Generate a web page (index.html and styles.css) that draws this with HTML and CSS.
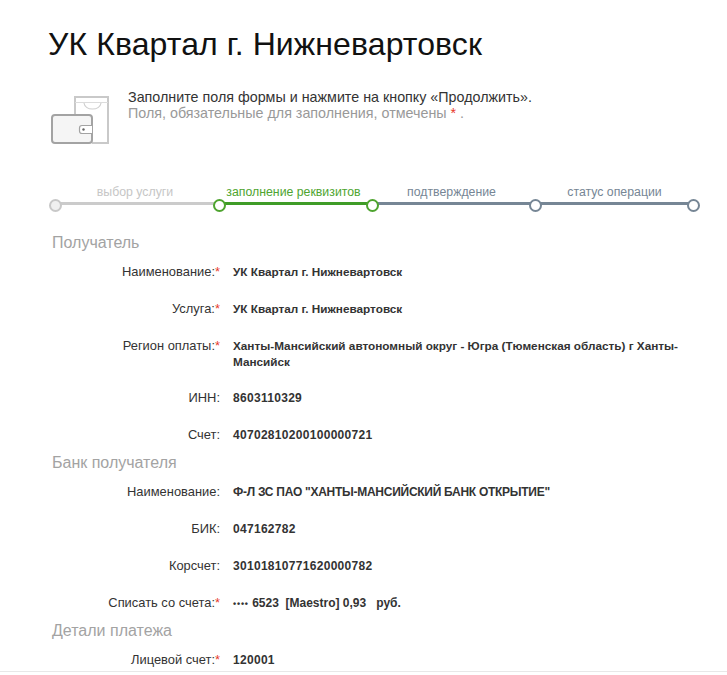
FILE: index.html
```html
<!DOCTYPE html>
<html lang="ru">
<head>
<meta charset="utf-8">
<title>УК Квартал г. Нижневартовск</title>
<link rel="stylesheet" href="styles.css">
</head>
<body>
<main class="page">
  <h1 class="title">УК Квартал г. Нижневартовск</h1>
  <div class="intro">
    <svg class="intro-icon" width="60" height="50" viewBox="0 0 60 50">
      <path d="M25 20V2h33v46H42" fill="#fff" stroke="#c9c9c9" stroke-width="2"/>
      <path d="M25 7.500h33" stroke="#dcdcdc" stroke-width="1" fill="none"/>
      <path d="M34 8c1 8 16 8 17 0" stroke="#cfcfcf" stroke-width="1.200" fill="none"/>
      <rect x="2" y="20" width="40" height="28" rx="3" fill="#f5f5f5" stroke="#a3a3a3" stroke-width="2"/>
      <path d="M42 30.500H32a2.500 2.500 0 0 0-2.500 2.500v3a2.500 2.500 0 0 0 2.500 2.500h10" fill="#fff" stroke="#a3a3a3" stroke-width="1.200"/>
      <circle cx="33.500" cy="34.500" r="1.200" fill="#666"/>
    </svg>
    <div class="intro-text">
      <p class="intro-main">Заполните поля формы и нажмите на кнопку «Продолжить».</p>
      <p class="intro-note">Поля, обязательные для заполнения, отмечены <span class="req">*</span> .</p>
    </div>
  </div>

  <ol class="steps">
    <li class="step step-done"><span class="step-label">выбор услуги</span></li>
    <li class="step step-active"><span class="step-label">заполнение реквизитов</span></li>
    <li class="step step-next"><span class="step-label">подтверждение</span></li>
    <li class="step step-next step-last"><span class="step-label">статус операции</span></li>
  </ol>

  <section class="group">
    <h2 class="group-title">Получатель</h2>
    <div class="row"><div class="label">Наименование:<span class="req">*</span></div><div class="value">УК Квартал г. Нижневартовск</div></div>
    <div class="row"><div class="label">Услуга:<span class="req">*</span></div><div class="value">УК Квартал г. Нижневартовск</div></div>
    <div class="row row-wrap"><div class="label">Регион оплаты:<span class="req">*</span></div><div class="value">Ханты-Мансийский автономный округ - Югра (Тюменская область) г Ханты-Мансийск</div></div>
    <div class="row"><div class="label">ИНН:</div><div class="value value-num">8603110329</div></div>
    <div class="row"><div class="label">Счет:</div><div class="value value-num">40702810200100000721</div></div>
  </section>

  <section class="group">
    <h2 class="group-title">Банк получателя</h2>
    <div class="row"><div class="label">Наименование:</div><div class="value value-caps">Ф-Л ЗС ПАО "ХАНТЫ-МАНСИЙСКИЙ БАНК ОТКРЫТИЕ"</div></div>
    <div class="row"><div class="label">БИК:</div><div class="value value-num">047162782</div></div>
    <div class="row"><div class="label">Корсчет:</div><div class="value value-num">30101810771620000782</div></div>
    <div class="row"><div class="label">Списать со счета:<span class="req">*</span></div><div class="value value-pay"><span class="dots">••••</span> 6523&nbsp; [Maestro] 0,93&nbsp;&nbsp; руб.</div></div>
  </section>

  <section class="group">
    <h2 class="group-title">Детали платежа</h2>
    <div class="row"><div class="label">Лицевой счет:<span class="req">*</span></div><div class="value value-num">120001</div></div>
  </section>
</main>
</body>
</html>
```
FILE: styles.css
```css
* { box-sizing: border-box; }
html, body { margin: 0; padding: 0; }
body {
  height: 675px;
  overflow: hidden;
  background: #fff;
  font-family: "Liberation Sans", Arial, sans-serif;
  color: #333;
}
.page {
  height: 672px;
  overflow: hidden;
  border-bottom: 1px solid #e8e8e8;
  padding: 26px 0 0 48px;
}
.title {
  margin: 0;
  font-size: 32px;
  line-height: 37px;
  font-weight: 400;
  letter-spacing: .1px;
  color: #111;
}
.intro {
  display: flex;
  margin-top: 24px;
  padding-left: 2px;
}
.intro-icon { flex: none; margin-top: 8px; }
.intro-text { margin: 2px 0 0 18px; font-size: 14.300px; line-height: 16px; }
.intro-main, .intro-note { margin: 0; }
.intro-main { color: #333; }
.intro-note { color: #999; }
.req { color: #e8392b; }

.steps {
  list-style: none;
  display: flex;
  margin: 40px 0 0;
  padding: 0 0 0 5px;
}
.step {
  position: relative;
  flex: none;
  width: 163px;
  height: 30px;
  text-align: center;
  font-size: 12.300px;
  line-height: 14px;
}
.step-done { width: 164px; }
.step-active { width: 153px; }
.step::before {
  content: "";
  position: absolute;
  left: 0;
  right: 0;
  top: 17px;
  height: 3px;
  background: #768695;
}
.step::after {
  content: "";
  position: absolute;
  left: -4px;
  top: 14px;
  width: 9px;
  height: 9px;
  border-radius: 50%;
  background: #fff;
  border: 2px solid #768695;
  z-index: 1;
}
.step-label { color: #768695; }
.step-done .step-label { color: #c6c6c6; }
.step-done::before { background: #cbcbcb; }
.step-done::after { border-color: #c8c8c8; background: #f0f0f0; }
.step-active .step-label { color: #4ea42f; }
.step-active::before { background: #3f9c27; }
.step-active::after { border-color: #4ea42f; }
.step-active + .step::after { border-color: #4ea42f; }
.step-last .step-label::after {
  content: "";
  position: absolute;
  right: -4px;
  top: 14px;
  width: 9px;
  height: 9px;
  border-radius: 50%;
  background: #fff;
  border: 2px solid #768695;
}

.group { width: 641px; padding-left: 4px; }
.steps + .group { margin-top: 19px; }
.group + .group { margin-top: 11px; }
.group + .group:last-child { margin-top: 10px; }
.group-title {
  margin: 0 0 12px;
  font-size: 16px;
  line-height: 18px;
  font-weight: 400;
  color: #a3a3a3;
}
.row {
  display: flex;
  margin-bottom: 21px;
  font-size: 11.750px;
  line-height: 16px;
}
.row-wrap { margin-bottom: 20px; }
.row:last-child { margin-bottom: 0; }
.label {
  flex: none;
  width: 168px;
  text-align: right;
  font-size: 12.900px;
  color: #333;
}
.value {
  flex: 1;
  margin-left: 13px;
  padding-right: 8px;
  font-weight: 700;
  color: #333;
}
.value-num { font-size: 12px; letter-spacing: .3px; }
.value-caps { font-size: 12px; letter-spacing: -.27px; }
.value-pay { font-size: 12px; }
.dots { font-size: 9px; letter-spacing: .8px; }
```
